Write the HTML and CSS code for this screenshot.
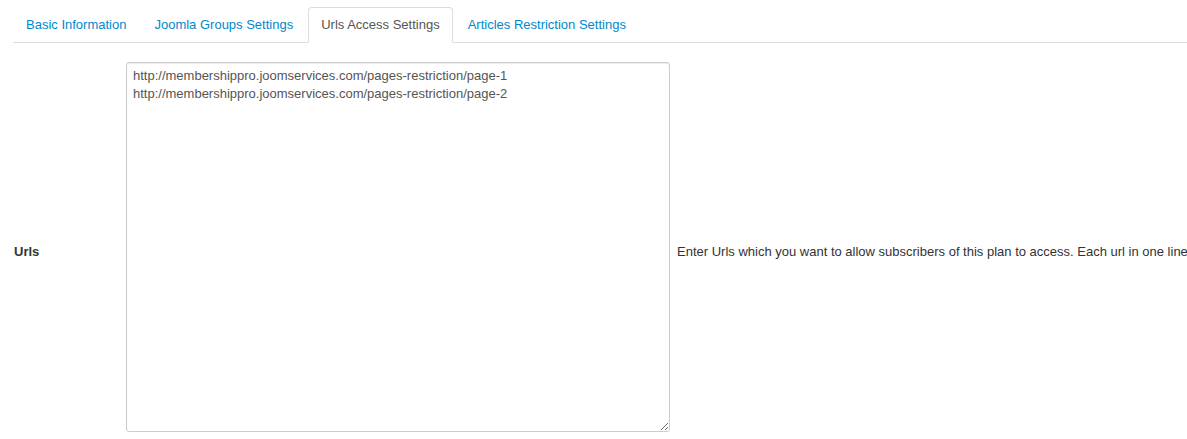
FILE: index.html
```html
<!DOCTYPE html>
<html>
<head>
<meta charset="utf-8">
<link rel="stylesheet" href="styles.css">
</head>
<body>
<div class="page">
  <ul class="tabs">
    <li class="tab"><a href="#">Basic Information</a></li>
    <li class="tab"><a href="#">Joomla Groups Settings</a></li>
    <li class="tab active"><a href="#">Urls Access Settings</a></li>
    <li class="tab"><a href="#">Articles Restriction Settings</a></li>
  </ul>
  <div class="row">
    <div class="label">Urls</div>
    <div class="field"><textarea class="urls">http://membershippro.joomservices.com/pages-restriction/page-1
http://membershippro.joomservices.com/pages-restriction/page-2</textarea></div>
    <div class="help">Enter Urls which you want to allow subscribers of this plan to access. Each url in one line</div>
  </div>
</div>
</body>
</html>
```

FILE: styles.css
```css
html, body {
  margin: 0;
  padding: 0;
  background: #fff;
}
body {
  font-family: "Liberation Sans", Arial, Helvetica, sans-serif;
  font-size: 13px;
  line-height: 18px;
  color: #333;
}
.page {
  padding: 7px 0 0 13px;
}
.tabs {
  list-style: none;
  margin: 0;
  padding: 0;
  display: flex;
  border-bottom: 1px solid #ddd;
}
.tab {
  margin-right: 2px;
  margin-bottom: -1px;
}
.tab a {
  display: block;
  padding: 8px 12px;
  line-height: 18px;
  border: 1px solid transparent;
  border-radius: 4px 4px 0 0;
  color: #0088cc;
  text-decoration: none;
}
.tab.active a {
  color: #555;
  background: #fff;
  border-color: #ddd #ddd transparent;
}
.row {
  display: flex;
  align-items: center;
  margin-top: 19px;
}
.label {
  flex: none;
  box-sizing: border-box;
  width: 113px;
  padding: 9px 0 0 1px;
  font-weight: bold;
}
.field {
  flex: none;
  width: 544px;
}
.urls {
  display: block;
  box-sizing: border-box;
  width: 544px;
  height: 370px;
  margin: 0;
  padding: 4px 6px;
  font-family: "Liberation Sans", Arial, Helvetica, sans-serif;
  font-size: 13px;
  line-height: 18px;
  color: #555;
  border: 1px solid #ccc;
  border-radius: 3px;
  box-shadow: inset 0 1px 1px rgba(0,0,0,0.075);
  resize: both;
}
.help {
  flex: 1;
  min-width: 0;
  padding: 9px 0 0 7px;
  white-space: nowrap;
}
```
